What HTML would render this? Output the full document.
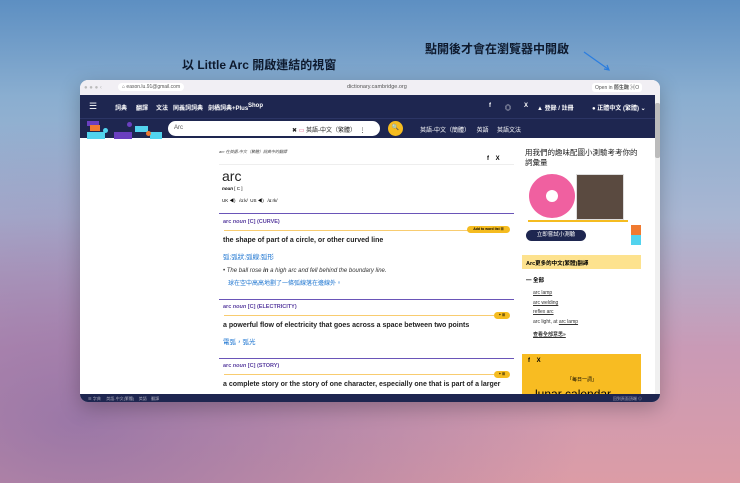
<!DOCTYPE html><html><head><meta charset="utf-8"><style>
*{margin:0;padding:0;box-sizing:border-box}
body{width:740px;height:483px;overflow:hidden;font-family:"Liberation Sans","Noto Sans CJK TC",sans-serif;position:relative;
background:radial-gradient(ellipse 500px 300px at 80px 420px,rgba(140,110,165,.8),rgba(140,110,165,0)),
linear-gradient(180deg,#5d8fc2 0%,#8aaed0 20%,#a9b6d2 45%,#c99ab6 72%,#dc9ca6 100%);}
.t{position:absolute;color:#0e1a2e;font-weight:bold;font-size:12px}
.win{position:absolute;left:80px;top:80px;width:580px;height:322px;border-radius:8px;overflow:hidden;background:#fff;box-shadow:0 6px 20px rgba(0,0,0,.25)}
.top{height:15px;background:#f1eff4;position:relative;font-size:5px;color:#555}
.nav{height:23px;background:#1e2650;position:relative;color:#fff;font-size:6px;font-weight:bold}
.nav span{position:absolute;top:8px}
.sb{height:20px;background:#1e2650;position:relative;border-top:1px solid #2c3565}
.a{position:absolute}
.blue{color:#1a73d0}
.pur{color:#5a3fa0;font-weight:bold;font-size:5.5px}
.hr{position:absolute;left:139px;width:295px;height:1px;background:#6a55b8}
.yl{position:absolute;left:144px;height:1px;background:#f8cc70}
.pill{position:absolute;background:#f5bc20;border-radius:5px;height:7px;font-size:3.5px;text-align:center;line-height:7px;font-weight:bold}
.def{position:absolute;left:143px;font-size:7px;font-weight:bold;color:#222}
</style></head><body>
<div class="t" style="left:182px;top:56px">以 Little Arc 開啟連結的視窗</div>
<div class="t" style="left:425px;top:40px">點開後才會在瀏覽器中開啟</div>
<svg class="a" style="left:582px;top:50px" width="30" height="22"><line x1="2" y1="2" x2="26" y2="19" stroke="#2a7de0" stroke-width="1.2"/><path d="M22 19 L27 20 L25 15" fill="none" stroke="#2a7de0" stroke-width="1.2"/></svg>
<div class="win">
 <div class="top">
  <span class="a" style="left:4px;top:5px;color:#bbb;font-size:6px">● ● ●  ‹</span>
  <span class="a" style="left:38px;top:3px;background:#fff;border-radius:4px;padding:1px 4px">⌂ eason.lu.91@gmail.com</span>
  <span class="a" style="left:267px;top:4px;font-size:5.5px">dictionary.cambridge.org</span>
  <span class="a" style="left:512px;top:3px;background:#fff;padding:1px 3px;border-radius:3px">Open in <b>簡生醜</b> ⌘O</span>
 </div>
 <div class="nav">
  <span style="left:9px;top:6px;font-size:9px;font-weight:normal">☰</span>
  <span style="left:35px">詞典</span><span style="left:56px">翻譯</span><span style="left:76px">文法</span><span style="left:93px">同義詞詞典</span><span style="left:128px">劍橋詞典+Plus</span><span style="left:168px">Shop</span>
  <span style="left:409px">f</span><span style="left:425px">◎</span><span style="left:444px">X</span><span style="left:457px">▲ 登錄 / 註冊</span><span style="left:512px">● 正體中文 (繁體) ⌄</span>
 </div>
 <div class="sb">
  <div class="a" style="left:7px;top:2px;width:12px;height:5px;background:#6a3fc0"></div>
  <div class="a" style="left:10px;top:6px;width:10px;height:6px;background:#f07a30"></div>
  <div class="a" style="left:7px;top:13px;width:18px;height:7px;background:#52d3ee"></div>
  <div class="a" style="left:23px;top:9px;width:5px;height:5px;border-radius:50%;background:#52d3ee"></div>
  <div class="a" style="left:47px;top:3px;width:5px;height:5px;border-radius:50%;background:#6a3fc0"></div>
  <div class="a" style="left:34px;top:13px;width:18px;height:7px;background:#6a3fc0"></div>
  <div class="a" style="left:55px;top:7px;width:13px;height:6px;background:#52d3ee"></div>
  <div class="a" style="left:70px;top:13px;width:12px;height:7px;background:#52d3ee"></div>
  <div class="a" style="left:66px;top:12px;width:5px;height:5px;border-radius:50%;background:#f07a30"></div>
  <div class="a" style="left:88px;top:2px;width:212px;height:15px;background:#fff;border-radius:8px;font-size:6px;color:#555;padding:4px 6px">Arc<span class="a" style="left:124px;top:4px;color:#222">✖ <span style="color:#e05080">▭</span> 英語-中文（繁體）&nbsp; ⋮</span></div>
  <div class="a" style="left:308px;top:2px;width:15px;height:15px;border-radius:50%;background:#f5bc20;font-size:6px;text-align:center;line-height:15px">🔍</div>
  <span class="a" style="left:340px;top:6px;color:#fff;font-size:6px">英語-中文（簡體）&nbsp;&nbsp;&nbsp; 英語 &nbsp;&nbsp;&nbsp; 英語文法</span>
 </div>
 <div class="a" style="left:139px;top:69px;font-size:4px;color:#444;font-style:italic">arc 在英語-中文（繁體）詞典中的翻譯</div>
 <div class="a" style="left:407px;top:76px;font-size:6px;font-weight:bold">f &nbsp;&nbsp; X</div>
 <div class="a" style="left:139px;top:84px;width:295px;height:1px;background:#eee"></div>
 <div class="a" style="left:142px;top:88px;font-size:14px;color:#222">arc</div>
 <div class="a" style="left:142px;top:106px;font-size:4.5px;font-style:italic;font-weight:bold">noun <span style="font-weight:normal;font-style:normal">[ C ]</span></div>
 <div class="a" style="left:142px;top:118px;font-size:4.5px">UK ◀) &nbsp; /ɑːk/ &nbsp;US ◀) &nbsp; /ɑːrk/</div>
 <div class="hr" style="top:133px"></div>
 <div class="a pur" style="left:143px;top:139px">arc <i>noun</i> [C] (CURVE)</div>
 <div class="yl" style="top:150px;width:250px"></div>
 <div class="pill" style="left:387px;top:146px;width:43px">Add to word list ☰</div>
 <div class="def" style="top:157px">the shape of part of a circle, or other curved line</div>
 <div class="a blue" style="left:143px;top:171px;font-size:6.5px">弧;弧狀;弧線;弧形</div>
 <div class="a" style="left:143px;top:188px;font-size:6px;font-style:italic;color:#333">• The ball rose <b>in</b> a high arc and fell behind the boundary line.</div>
 <div class="a blue" style="left:148px;top:198px;font-size:6px">球在空中高高地劃了一條弧線落在邊線外。</div>
 <div class="hr" style="top:219px"></div>
 <div class="a pur" style="left:143px;top:224px">arc <i>noun</i> [C] (ELECTRICITY)</div>
 <div class="yl" style="top:235px;width:270px"></div>
 <div class="pill" style="left:414px;top:232px;width:16px">+ ☰</div>
 <div class="def" style="top:242px">a powerful flow of electricity that goes across a space between two points</div>
 <div class="a blue" style="left:143px;top:256px;font-size:6.5px">電弧，弧光</div>
 <div class="hr" style="top:278px"></div>
 <div class="a pur" style="left:143px;top:283px">arc <i>noun</i> [C] (STORY)</div>
 <div class="yl" style="top:294px;width:270px"></div>
 <div class="pill" style="left:414px;top:291px;width:16px">+ ☰</div>
 <div class="def" style="top:301px">a complete story or the story of one character, especially one that is part of a larger</div>
 <!-- sidebar -->
 <div class="a" style="left:445px;top:68px;font-size:7.5px;color:#222;line-height:10px;width:115px">用我們的趣味配圖小測驗考考你的詞彙量</div>
 <div class="a" style="left:449px;top:94px;width:46px;height:44px;border-radius:50%;background:#f060a0"><div style="position:absolute;left:17px;top:16px;width:12px;height:12px;border-radius:50%;background:#fff"></div></div>
 <div class="a" style="left:496px;top:94px;width:48px;height:46px;background:#5a4a40;border:1px solid #ddd"></div>
 <div class="a" style="left:448px;top:140px;width:100px;height:2px;background:#f5bc20"></div>
 <div class="a" style="left:446px;top:150px;width:60px;height:11px;background:#1e2650;border-radius:6px;color:#fff;font-size:5.5px;text-align:center;line-height:11px">立即嘗試小測驗</div>
 <div class="a" style="left:551px;top:145px;width:10px;height:10px;background:#f07a30"></div>
 <div class="a" style="left:551px;top:155px;width:10px;height:10px;background:#52d3ee"></div>
 <div class="a" style="left:442px;top:175px;width:119px;height:14px;background:#fde28e;font-size:5.5px;font-weight:bold;padding:4px 4px">Arc更多的中文(繁體)翻譯</div>
 <div class="a" style="left:446px;top:196px;font-size:5.5px;font-weight:bold">━ 全部</div>
 <div class="a" style="left:453px;top:209px;font-size:5px;line-height:9.6px;color:#333"><u>arc lamp</u><br><u>arc welding</u><br><u>reflex arc</u><br>arc light, at <u>arc lamp</u><br><b style="display:block;margin-top:4px"><u>查看全部意思»</u></b></div>
 <div class="a" style="left:442px;top:274px;width:119px;height:48px;background:#f8bc22"><span class="a" style="left:6px;top:4px;font-size:6px;font-weight:bold">f &nbsp;&nbsp; X</span><span class="a" style="left:45px;top:22px;font-size:5px">「每日一詞」</span><span class="a" style="left:13px;top:33px;font-size:12px">lunar calendar</span></div>
 <div class="a" style="left:575px;top:15px;width:5px;height:307px;background:#f0f0f0"><div style="margin-top:8px;height:55px;background:#bbb;border-radius:2px"></div></div>
 <div class="a" style="left:0;top:314px;width:580px;height:8px;background:#1e2650;color:#aab;font-size:4px;padding:2px 8px">☰ 字典 &nbsp;&nbsp;&nbsp; 英語-中文(繁體) &nbsp;&nbsp; 英語 &nbsp;&nbsp; 翻譯<span style="float:right;margin-right:10px">回到頁面頂端 ⊙</span></div>
</div>
</body></html>
